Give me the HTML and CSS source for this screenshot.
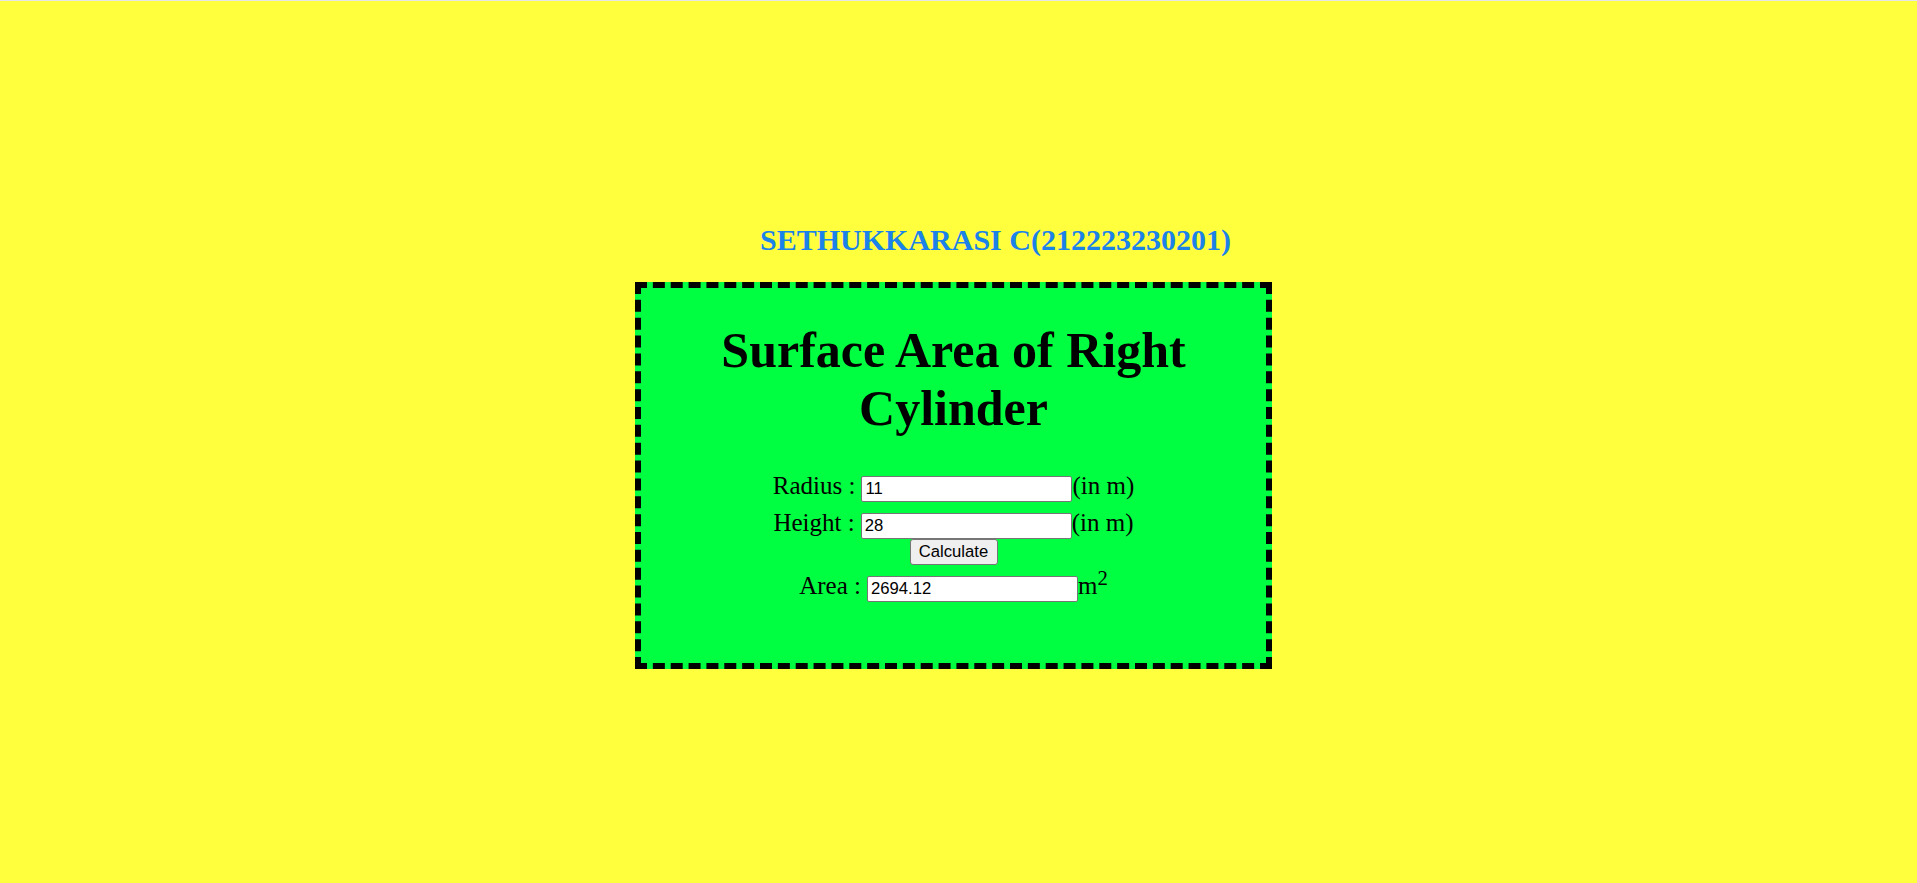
FILE: index.html
```html
<!DOCTYPE html>
<html lang="en">
<head>
<meta charset="utf-8">
<title>Surface Area of Right Cylinder</title>
<link rel="stylesheet" href="styles.css">
</head>
<body>
<div class="topline"></div>
<h2 class="title">SETHUKKARASI C(212223230201)</h2>
<div class="wrap">
  <div class="container">
    <h1 class="heading">Surface Area of Right Cylinder</h1>
    <form class="form">
      <div class="row">
        <span class="lbl">Radius :</span>
        <input class="field" type="text" name="radius" value="11">
        <span class="unit">(in m)</span>
      </div>
      <div class="row row-gap">
        <span class="lbl">Height :</span>
        <input class="field" type="text" name="height" value="28">
        <span class="unit">(in m)</span>
      </div>
      <div class="row">
        <button class="btn" type="button">Calculate</button>
      </div>
      <div class="row row-gap">
        <span class="lbl">Area :</span>
        <input class="field" type="text" name="area" value="2694.12">
        <span class="unit">m<sup class="sup">2</sup></span>
      </div>
    </form>
  </div>
</div>
</body>
</html>
```
FILE: styles.css
```css
html, body {
  margin: 0;
  padding: 0;
}

body {
  background: #ffff3d;
  min-height: 100vh;
  font-family: "Liberation Serif", "Times New Roman", serif;
  color: #000;
}

.topline {
  height: 1px;
  background: #e6e6e6;
}

.title {
  margin: 222px 0 0 0;
  padding-left: 74px;
  text-align: center;
  font-size: 30px;
  line-height: 34px;
  font-weight: bold;
  color: #1a82e8;
}

.wrap {
  display: flex;
  justify-content: center;
  padding-right: 10px;
  margin-top: 25px;
}

.container {
  width: 625px;
  height: 375px;
  border: 6px dashed #000;
  background: #00ff40;
}

.heading {
  margin: 34px 0 0 0;
  text-align: center;
  font-size: 50px;
  line-height: 57.5px;
  font-weight: bold;
}

.form {
  margin-top: 39px;
  font-size: 25px;
}

.row {
  display: flex;
  justify-content: center;
  align-items: baseline;
  height: 26px;
}

.row-gap {
  margin-top: 11px;
}

.lbl {
  line-height: 20px;
  margin-right: 6px;
}

.unit {
  line-height: 20px;
}

.sup {
  font-size: 20.75px;
  line-height: 0;
}

.field {
  box-sizing: border-box;
  width: 211px;
  height: 26px;
  margin: 0;
  padding: 0 3px;
  border: 1px solid #767676;
  border-radius: 2px;
  background: #fff;
  font-family: "Liberation Sans", Arial, sans-serif;
  font-size: 16.67px;
  color: #000;
}

.btn {
  box-sizing: border-box;
  width: 88px;
  height: 26px;
  margin: 0;
  padding: 0;
  border: 1px solid #767676;
  border-radius: 3px;
  background: #efefef;
  font-family: "Liberation Sans", Arial, sans-serif;
  font-size: 16.67px;
  color: #000;
}
```
